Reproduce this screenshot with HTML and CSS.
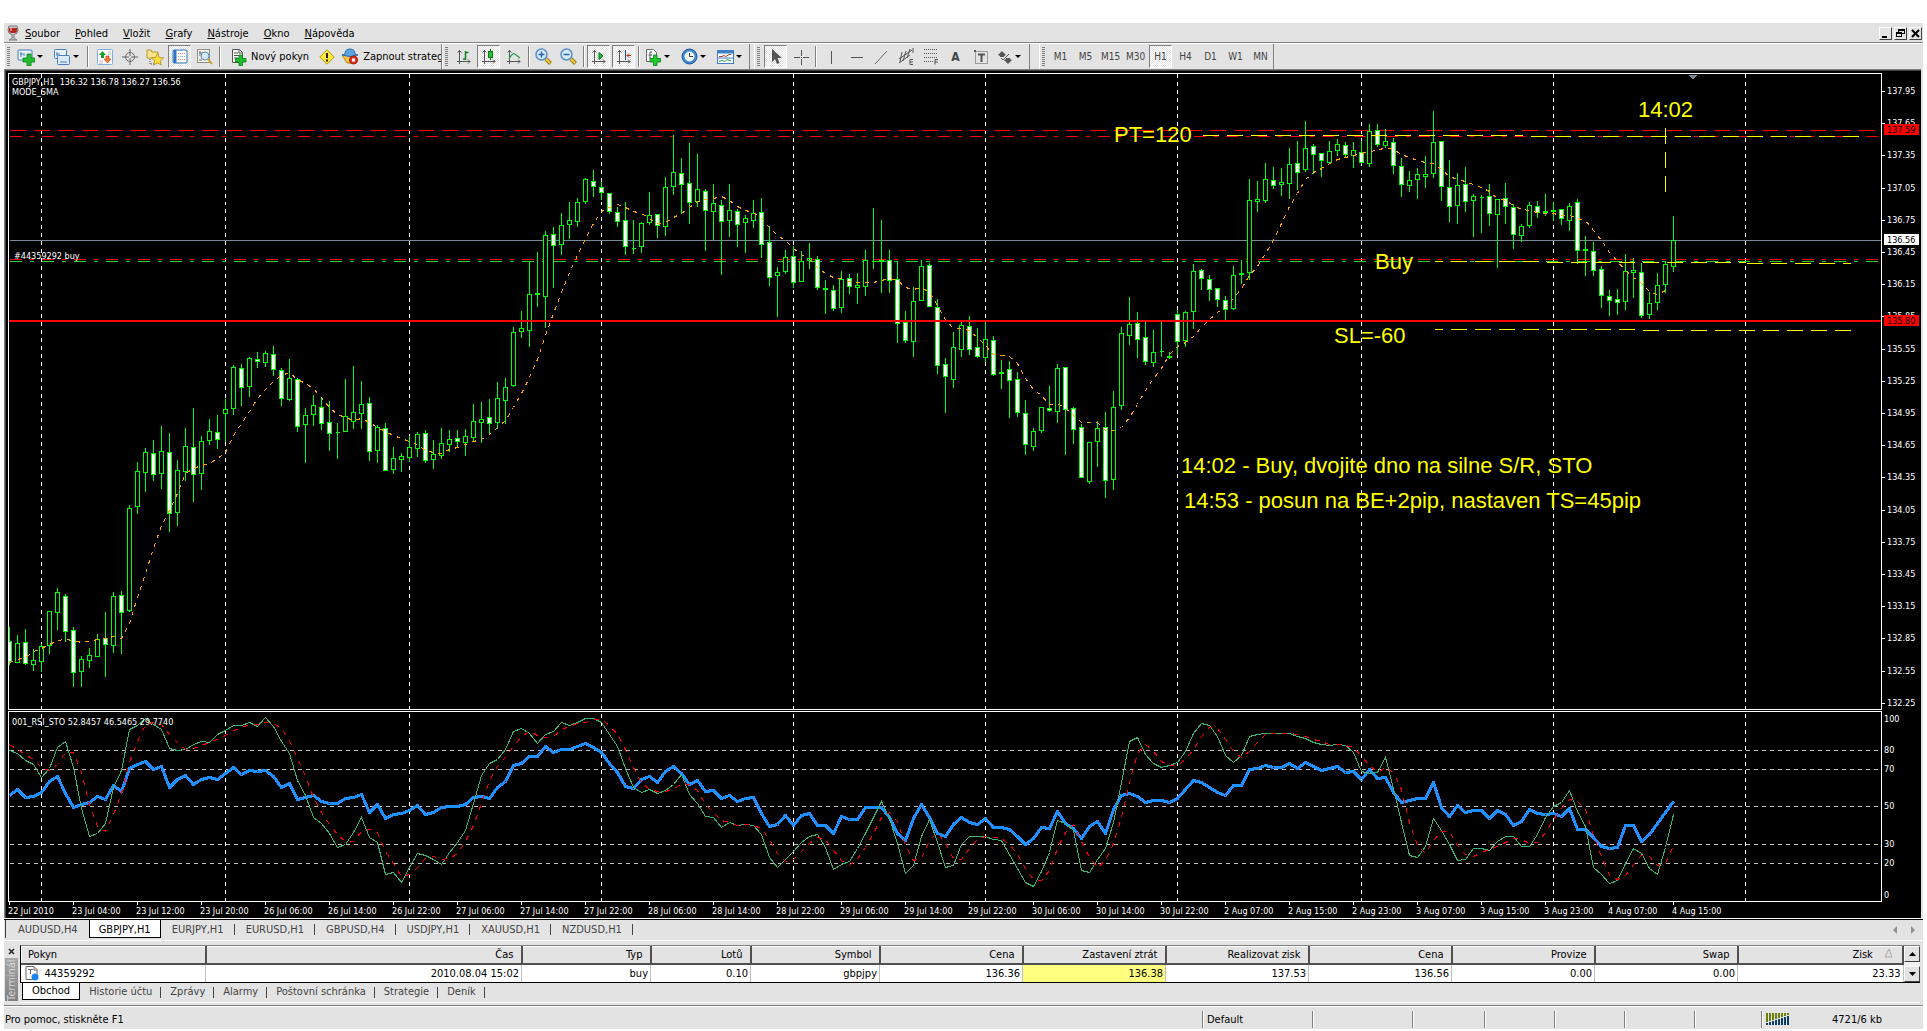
FILE: index.html
```html
<!DOCTYPE html>
<html lang="cs">
<head>
  <meta charset="UTF-8" />
  <meta name="viewport" content="width=device-width, initial-scale=1.0"/>
  <title>GBPJPY,H1</title>
  <link rel="stylesheet" href="styles.css">
</head>
<body>
  <div class="app">
    <header class="menubar">
      <svg class="logo" width="12" height="16" viewBox="0 0 12 16">
        <path d="M2 1h8l1 4q0 4-4 4.500v4l3 1.500H2l3-1.500v-4Q1 9 1 5z" fill="#c9c9c9" stroke="#777"/>
        <path d="M2 3h8q1 4-2 5H4Q1 7 2 3z" fill="#b8251c"/>
        <path d="M4 2v4" stroke="#f6d4d0"/>
      </svg>
      <nav class="menu">
        <a href="#"><u>S</u>oubor</a>
        <a href="#"><u>P</u>ohled</a>
        <a href="#"><u>V</u>ložit</a>
        <a href="#"><u>G</u>rafy</a>
        <a href="#"><u>N</u>ástroje</a>
        <a href="#"><u>O</u>kno</a>
        <a href="#"><u>N</u>ápověda</a>
      </nav>
      <div class="window-buttons">
        <button aria-label="Minimalizovat"><svg width="11" height="11"><path d="M2 9h5" stroke="#000" stroke-width="2"/></svg></button>
        <button aria-label="Obnovit"><svg width="11" height="11" fill="none" stroke="#000" shape-rendering="crispEdges"><path d="M3.500 4V1.500h6v4H7M3 2.500h7M1.500 4.500h5v4h-5zM1 5.500h6"/></svg></button>
        <button aria-label="Zavřít"><svg width="11" height="11"><path d="M2 2l7 7M9 2l-7 7" stroke="#000" stroke-width="2"/></svg></button>
      </div>
    </header>

    <div class="toolbars">
      <div class="toolbar toolbar-main">
        <span class="grip"></span>
        <button class="tool drop" aria-label="Nový graf">
          <svg width="18" height="18" viewBox="0 0 18 18"><rect x="1" y="2" width="14" height="10" rx="1" fill="#e8f1fb" stroke="#4a7fb5"/><path d="M4 4v5M3 6h3M7 5v3" stroke="#4a7fb5"/><path d="M10 6h4v4h4v4h-4v4h-4v-4H6v-4h4z" fill="#1fbf2e" stroke="#0b7a17" stroke-width=".8"/></svg>
        </button>
        <button class="tool drop" aria-label="Profily">
          <svg width="18" height="18" viewBox="0 0 18 18"><rect x="1.500" y="1.500" width="12" height="9" rx="1" fill="#e8f1fb" stroke="#4a7fb5"/><path d="M4 4v4M3 6h4" stroke="#4a7fb5"/><rect x="4.500" y="7.500" width="12" height="9" rx="1" fill="#dbe9f8" stroke="#4a7fb5"/><path d="M7 14h7" stroke="#4a7fb5"/></svg>
        </button>
        <span class="sep"></span>
        <button class="tool" aria-label="Přehled trhu">
          <svg width="16" height="16" viewBox="0 0 16 16"><rect x=".5" y=".5" width="15" height="15" rx="1" fill="#fff" stroke="#7fb0dc"/><path d="M11 3h3M2 12h4M11 5h3M2 14h4" stroke="#bbb"/><path d="M5.500 2L9 6H7v3H4V6H2z" fill="#18a02a"/><path d="M10.500 14l3.500-4h-2V7H9v3H7z" fill="#f47a3a" stroke="#b13d10" stroke-width=".6"/></svg>
        </button>
        <button class="tool" aria-label="Datové okno">
          <svg width="16" height="16" viewBox="0 0 16 16" fill="none" stroke="#666"><circle cx="8" cy="8" r="4.500"/><path d="M8 0v7M8 9v7M0 8h7M9 8h7"/></svg>
        </button>
        <button class="tool" aria-label="Navigátor">
          <svg width="18" height="18" viewBox="0 0 18 18"><path d="M1 2h4l1 2h6v6H1z" fill="#f9e58a" stroke="#b7962c"/><path d="M4 11v5h5" fill="none" stroke="#444" stroke-dasharray="1 1"/><path d="M11.500 5.500l1.800 3.900 4.200.500-3.100 2.900.800 4.200-3.700-2.100L7.800 17l.8-4.200-3.100-2.900 4.200-.5z" fill="#fbdf3b" stroke="#b08a15" stroke-width=".8"/></svg>
        </button>
        <button class="tool pressed" aria-label="Terminál">
          <svg width="16" height="16" viewBox="0 0 16 16"><rect x="1" y="1" width="14" height="13" rx="1" fill="#fff" stroke="#2f74bd"/><path d="M3 1v13" stroke="#2f74bd" stroke-width="3"/><path d="M6 4.500h8M6 10.500h8" stroke="#e07a7a" stroke-dasharray="1 1"/><path d="M6 7.500h8" stroke="#7aa5e0" stroke-dasharray="1 1"/></svg>
        </button>
        <button class="tool" aria-label="Tester strategií">
          <svg width="16" height="16" viewBox="0 0 16 16"><rect x=".5" y=".5" width="12" height="13" fill="#f3f0dc" stroke="#8f8f8f"/><path d="M2 4h4M3 2v5M2 11h3" stroke="#777"/><circle cx="8" cy="7" r="4" fill="#d5e8fa" stroke="#5d8fc4"/><path d="M11 10l4 5" stroke="#caa227" stroke-width="2"/></svg>
        </button>
        <span class="sep"></span>
        <button class="tool text-tool">
          <svg width="16" height="18" viewBox="0 0 16 18"><path d="M1.500 1.500h7l3 3v10h-10z" fill="#fff" stroke="#555"/><path d="M8 1v4h4M3 5h4M3 7.500h6M3 10h4" fill="none" stroke="#555"/><path d="M8 7h3.500v3.500H15V14h-3.500v3.500H8V14H4.500v-3.500H8z" fill="#1fbf2e" stroke="#0b7a17" stroke-width=".8"/></svg>
          Nový pokyn
        </button>
        <button class="tool" aria-label="Upozornění">
          <svg width="16" height="16" viewBox="0 0 16 16"><path d="M8 .8L15.200 8 8 15.200.8 8z" fill="#ffe83b" stroke="#b99a0a"/><path d="M8 4v5M8 10.500v2" stroke="#222" stroke-width="2"/></svg>
        </button>
        <button class="tool text-tool strategy">
          <svg width="18" height="17" viewBox="0 0 18 17"><path d="M1 7h14l-3 8H6z" fill="#f5c542" stroke="#b98813"/><path d="M4 6q0-5 5-5t5 5l3 1q-8 3-16 0z" fill="#5da3e4" stroke="#2c6cae"/><circle cx="12.500" cy="12" r="4" fill="#e0341f" stroke="#a31806"/><rect x="11" y="10.500" width="3" height="3" fill="#fff"/></svg>
          Zapnout strategie
        </button>
      </div>

      <div class="toolbar">
        <span class="grip"></span>
        <button class="tool" aria-label="Sloupcový graf">
          <svg width="16" height="16" viewBox="0 0 16 16" fill="none" stroke="#555"><path d="M3.500 1v14M1 12.500h13M1.500 3.500l2-2 2 2M12 10.500l2 2-2 2"/><path d="M9.500 2v9M9.500 3.500h3M7 10h3" stroke="#12831c" stroke-width="1.500"/></svg>
        </button>
        <button class="tool pressed" aria-label="Svíčkový graf">
          <svg width="16" height="16" viewBox="0 0 16 16" fill="none" stroke="#555"><path d="M3.500 1v14M1 12.500h13M1.500 3.500l2-2 2 2M12 10.500l2 2-2 2"/><path d="M9.500 0v11" stroke="#0b7a17"/><rect x="7.500" y="2.500" width="4" height="6" fill="#25c032" stroke="#0b7a17"/></svg>
        </button>
        <button class="tool" aria-label="Čárový graf">
          <svg width="16" height="16" viewBox="0 0 16 16" fill="none" stroke="#555"><path d="M3.500 1v14M1 12.500h13M1.500 3.500l2-2 2 2M12 10.500l2 2-2 2"/><path d="M3 10q4-8 7-4l4 3" stroke="#2c9a4c" stroke-width="1.200"/></svg>
        </button>
        <span class="sep"></span>
        <button class="tool" aria-label="Přiblížit">
          <svg width="17" height="17" viewBox="0 0 17 17"><path d="M11 11l4.500 4.500" stroke="#9a7a12" stroke-width="4"/><path d="M11 11l4 4" stroke="#f3cf45" stroke-width="2"/><circle cx="6.500" cy="6.500" r="5.500" fill="#d9ebfb" stroke="#5a8fc8" stroke-width="1.500"/><path d="M3.500 6.500h6M6.500 3.500v6" stroke="#2566b0" stroke-width="1.500"/></svg>
        </button>
        <button class="tool" aria-label="Oddálit">
          <svg width="17" height="17" viewBox="0 0 17 17"><path d="M11 11l4.500 4.500" stroke="#9a7a12" stroke-width="4"/><path d="M11 11l4 4" stroke="#f3cf45" stroke-width="2"/><circle cx="6.500" cy="6.500" r="5.500" fill="#d9ebfb" stroke="#5a8fc8" stroke-width="1.500"/><path d="M3.500 6.500h6" stroke="#2566b0" stroke-width="1.500"/></svg>
        </button>
        <span class="sep"></span>
        <button class="tool pressed" aria-label="Automatický posun">
          <svg width="16" height="16" viewBox="0 0 16 16" fill="none" stroke="#555"><path d="M3.500 1v14M1 12.500h13M1.500 3.500l2-2 2 2M12 10.500l2 2-2 2"/><path d="M8 3.500l4 3.500-4 3.500z" fill="#22b32e" stroke="#0b7a17"/></svg>
        </button>
        <button class="tool pressed" aria-label="Odsazení grafu">
          <svg width="16" height="16" viewBox="0 0 16 16" fill="none" stroke="#555"><path d="M3.500 1v14M1 12.500h13M1.500 3.500l2-2 2 2M12 10.500l2 2-2 2"/><path d="M9.500 1v10" stroke="#1d4e89"/><path d="M11 6.500h4M13 4.500l-2 2 2 2" stroke="#b83206"/></svg>
        </button>
        <span class="sep"></span>
        <button class="tool drop" aria-label="Indikátory">
          <svg width="17" height="18" viewBox="0 0 17 18"><path d="M1.500 1.500h7l3 3v9h-10z" fill="#fff" stroke="#666"/><path d="M7 4H5v7M3.500 7H7" fill="none" stroke="#555"/><path d="M8.500 7H12v3.500h3.500V14H12v3.500H8.500V14H5v-3.500h3.500z" fill="#1fce2e" stroke="#0b7a17" stroke-width=".8"/></svg>
        </button>
        <button class="tool drop" aria-label="Periody">
          <svg width="17" height="17" viewBox="0 0 17 17"><circle cx="8.500" cy="8.500" r="7.500" fill="#3b86d6" stroke="#1c559c"/><circle cx="8.500" cy="8.500" r="5" fill="#f3f8fd"/><path d="M8.500 5v3.500H12" fill="none" stroke="#333"/></svg>
        </button>
        <button class="tool drop" aria-label="Šablony">
          <svg width="17" height="16" viewBox="0 0 17 16"><rect x=".5" y="1.500" width="16" height="13" fill="#fff" stroke="#3f7fc6"/><path d="M1 3h15" stroke="#3f7fc6" stroke-width="3"/><path d="M1 9h15" stroke="#3f7fc6"/><path d="M2 7.500h3l2-1 2 1 3-2h2" fill="none" stroke="#b4412b"/><path d="M2 12.500l3-1 3 1 2-2 4 1.500" fill="none" stroke="#2c9a4c"/></svg>
        </button>
      </div>

      <div class="toolbar">
        <span class="grip"></span>
        <button class="tool pressed" aria-label="Kurzor">
          <svg width="16" height="16" viewBox="0 0 16 16"><path d="M4 0v13l3-3 2 5 2.500-1-2-5H14z" fill="#555"/></svg>
        </button>
        <button class="tool" aria-label="Nitkový kříž">
          <svg width="16" height="16" viewBox="0 0 16 16" stroke="#555" shape-rendering="crispEdges"><path d="M8.500 1v6M8.500 10v6M1 8.500h6M10 8.500h6M8 8.500h1"/></svg>
        </button>
        <span class="sep"></span>
        <button class="tool" aria-label="Svislá čára">
          <svg width="16" height="16" viewBox="0 0 16 16" stroke="#555" shape-rendering="crispEdges"><path d="M8.500 2v13"/></svg>
        </button>
        <button class="tool" aria-label="Vodorovná čára">
          <svg width="16" height="16" viewBox="0 0 16 16" stroke="#555" shape-rendering="crispEdges"><path d="M3 8.500h12"/></svg>
        </button>
        <button class="tool" aria-label="Trendová čára">
          <svg width="16" height="16" viewBox="0 0 16 16" stroke="#666"><path d="M2 15L14 2"/></svg>
        </button>
        <button class="tool" aria-label="Kanál">
          <svg width="16" height="17" viewBox="0 0 16 17" stroke="#555" fill="none"><path d="M1 11L14 2M1 15L12 7M4 4L2 14M8 3L5 13M12 1L9 10M15 0v5"/><path d="M15 11.500h-3v5h3M12 14h3"/></svg>
        </button>
        <button class="tool" aria-label="Fibonacci">
          <svg width="16" height="17" viewBox="0 0 16 17" stroke="#555" fill="none"><path d="M1 1.500h14M1 5.500h14M1 9.500h14M1 13.500h9" stroke-dasharray="1 1"/><path d="M15 11.500h-3v5M12 14h3"/></svg>
        </button>
        <button class="tool glyph" aria-label="Text">A</button>
        <button class="tool" aria-label="Popisek">
          <svg width="16" height="16" viewBox="0 0 16 16" fill="none" stroke="#555"><rect x="2.500" y="2.500" width="12" height="12" stroke-dasharray="1 1"/><path d="M5 5.500h7M8.500 5v8" stroke-width="2"/><path d="M1 1h2v2H1z" fill="#555" stroke="none"/></svg>
        </button>
        <button class="tool drop" aria-label="Šipky">
          <svg width="16" height="16" viewBox="0 0 16 16" fill="#555"><path d="M5 2l4 4-2 1v1H3V7L1 6zM11 15l-4-4 2-1V9h4v1l2 1z"/><path d="M12 5l-6 6-2-2" fill="none" stroke="#555"/></svg>
        </button>
      </div>

      <div class="toolbar periods">
        <span class="grip"></span>
        <button class="tool">M1</button>
        <button class="tool">M5</button>
        <button class="tool">M15</button>
        <button class="tool">M30</button>
        <button class="tool pressed">H1</button>
        <button class="tool">H4</button>
        <button class="tool">D1</button>
        <button class="tool">W1</button>
        <button class="tool">MN</button>
      </div>
    </div>

    <main class="chart">
      <div class="pane"><svg id="price" width="100%" height="635"></svg></div>
      <svg class="scale" id="scale" width="39" height="829"></svg>
      <div class="pane"><svg id="indicator" width="100%" height="189"></svg></div>
      <ol class="times" id="times"></ol>
    </main>

    <div class="chart-tabs">
      <button>AUDUSD,H4</button>
      <button class="active">GBPJPY,H1</button>
      <button>EURJPY,H1</button>
      <button>EURUSD,H1</button>
      <button>GBPUSD,H4</button>
      <button>USDJPY,H1</button>
      <button>XAUUSD,H1</button>
      <button>NZDUSD,H1</button>
      <div class="scroll-tabs">
        <svg width="22" height="9"><path d="M4 0v8L0 4zM18 0v8l4-4z" fill="#909090"/></svg>
      </div>
    </div>

    <section class="terminal">
      <div class="terminal-side">
        <button class="close" aria-label="Zavřít terminál"><svg width="7" height="7"><path d="M1 1l5 5M6 1L1 6" stroke="#222" stroke-width="1.500"/></svg></button>
        <span class="terminal-title">Terminál</span>
      </div>
      <div class="terminal-body">
        <div class="orders-wrap">
          <table class="orders">
            <thead>
              <tr>
                <th class="c-order">Pokyn</th>
                <th class="c-time">Čas</th>
                <th class="c-type">Typ</th>
                <th class="c-lots">Lotů</th>
                <th class="c-symbol">Symbol</th>
                <th class="c-num">Cena</th>
                <th class="c-num">Zastavení ztrát</th>
                <th class="c-num">Realizovat zisk</th>
                <th class="c-num">Cena</th>
                <th class="c-num">Provize</th>
                <th class="c-num">Swap</th>
                <th>Zisk <svg class="sort" width="9" height="9"><path d="M1 8L5 0l3 8z" fill="none" stroke="#aaa"/></svg></th>
              </tr>
            </thead>
            <tbody>
              <tr>
                <td>
                  <svg class="order-icon" width="14" height="15" viewBox="0 0 14 15"><path d="M1 .5h8l3 3v10H1z" fill="#fff" stroke="#666"/><path d="M3 3.500h5M5.500 3v5M9 1v3h3" fill="none" stroke="#666"/><circle cx="10" cy="11" r="3.500" fill="#1e86f0"/></svg>44359292
                </td>
                <td>2010.08.04 15:02</td>
                <td>buy</td>
                <td>0.10</td>
                <td>gbpjpy</td>
                <td>136.36</td>
                <td class="stop">136.38</td>
                <td>137.53</td>
                <td>136.56</td>
                <td>0.00</td>
                <td>0.00</td>
                <td>23.33</td>
              </tr>
            </tbody>
          </table>
          <div class="scrollbar">
            <button aria-label="Nahoru"><svg width="7" height="4"><path d="M0 4h7L3.500 0z"/></svg></button>
            <button aria-label="Dolů"><svg width="7" height="4"><path d="M0 0h7L3.500 4z"/></svg></button>
          </div>
        </div>
        <div class="terminal-tabs">
          <button class="active">Obchod</button>
          <button>Historie účtu</button>
          <button>Zprávy</button>
          <button>Alarmy</button>
          <button>Poštovní schránka</button>
          <button>Strategie</button>
          <button>Deník</button>
        </div>
      </div>
    </section>

    <footer class="statusbar">
      <span class="help">Pro pomoc, stiskněte F1</span>
      <span class="cell s110">Default</span>
      <span class="cell s100"></span>
      <span class="cell s72"></span>
      <span class="cell s70"></span>
      <span class="cell s70"></span>
      <span class="cell s70"></span>
      <span class="cell s67"></span>
      <span class="cell traffic">
        <svg width="24" height="12" shape-rendering="crispEdges">
          <path d="M1 0v9M4 0v8M7 0v7M10 0v6M13 0v5M16 0v4M19 0v3M22 0v2" stroke="#6b7f10" stroke-width="2"/>
          <path d="M1 12v-2M4 12v-3M7 12v-4M10 12v-5M13 12v-6M16 12v-7M19 12v-8M22 12V3" stroke="#0d3f66" stroke-width="2"/>
        </svg>
        <span>4721/6 kb</span>
      </span>
    </footer>
  </div>

  <script src="chart.js"></script>
</body>
</html>
```

FILE: styles.css
```css
* {
  box-sizing: border-box;
}

body {
  margin: 0;
  padding: 23px 4px 4px;
  background: #fff;
  color: #000;
  font-family: "DejaVu Sans Condensed", "Noto Sans", sans-serif;
  font-size: 11px;
}

button {
  margin: 0;
  padding: 0;
  border: none;
  background: none;
  color: inherit;
  font: inherit;
}

.app {
  display: flex;
  flex-direction: column;
  background: #e3e3e3;
}

/* menu */

.menubar {
  display: flex;
  align-items: center;
  height: 20px;
  padding: 1px 1px 0 3px;
  border-bottom: 1px solid #808080;
}

.menu {
  display: flex;
  flex: 1;
  gap: 15px;
  padding-left: 6px;
}

.menu a {
  color: #000;
  text-decoration: none;
}

.window-buttons {
  display: flex;
  gap: 2px;
}

.window-buttons button,
.scrollbar button {
  display: flex;
  align-items: center;
  justify-content: center;
  background: #e3e3e3;
  border: 1px solid;
  border-color: #fff #404040 #404040 #fff;
}

.window-buttons button {
  width: 13px;
  height: 13px;
}

/* toolbars */

.toolbars {
  display: flex;
  gap: 4px;
  height: 26px;
  border-top: 1px solid #fff;
}

.toolbar {
  display: flex;
  align-items: center;
  border-left: 1px solid #fff;
  border-right: 1px solid #808080;
}

.toolbar-main {
  width: 438px;
  margin-right: -4px;
  overflow: hidden;
}

.grip {
  flex: none;
  width: 3px;
  height: 20px;
  margin: 0 3px 0 2px;
  background: repeating-linear-gradient(#808080 0 1px, #e3e3e3 1px 2px);
}

.tool {
  display: flex;
  flex: none;
  align-items: center;
  justify-content: center;
  width: 23px;
  height: 23px;
  margin: 0 1px;
  color: #444;
  white-space: nowrap;
}

.tool.pressed {
  border: 1px solid;
  border-color: #808080 #fff #fff #808080;
  background: repeating-conic-gradient(#fff 0 25%, #e3e3e3 0 50%) 0 0 / 2px 2px;
}

.tool.drop {
  justify-content: flex-start;
  gap: 2px;
  width: 36px;
  margin: 0;
  padding-left: 4px;
}

.tool.drop::after {
  content: "";
  border: 3px solid transparent;
  border-top-color: #000;
  border-bottom: none;
}

.tool.text-tool {
  gap: 4px;
  width: auto;
  padding: 0 4px 0 6px;
  color: #000;
}

.tool.strategy {
  padding-left: 1px;
}

.tool.glyph {
  font-size: 12px;
  font-weight: bold;
}

.periods {
  margin-left: 5px;
  font-size: 10px;
}

.sep {
  flex: none;
  width: 2px;
  height: 21px;
  margin: 0 1px 0 2px;
  border-left: 1px solid #808080;
  border-right: 1px solid #fff;
}

.toolbar-main .sep {
  margin: 0 3px 0 2px;
}

/* chart */

.chart {
  display: grid;
  grid-template-columns: 1fr 39px;
  row-gap: 1px;
  margin-right: 2px;
  padding: 3px 0 0 3px;
  border-top: 1px solid #808080;
  border-left: 1px solid #808080;
  background: #000;
  box-shadow: inset 1px 1px #404040;
  color: #fff;
}

.pane {
  border: 1px solid #fff;
}

.pane svg {
  overflow: hidden;
}

.chart svg {
  display: block;
}

.chart svg text {
  font-size: 9px;
  fill: #fff;
}

.chart svg .note {
  font-family: "Liberation Sans", Arial, sans-serif;
  font-size: 22px;
  fill: #ff0;
}

.chart svg .dark {
  fill: #000;
}

.scale {
  grid-row: 1 / 3;
  grid-column: 2;
}

.times {
  display: flex;
  grid-column: 1 / 3;
  height: 16px;
  margin: -1px 0 0;
  padding: 0;
  list-style: none;
  font-size: 9px;
}

.times li {
  flex: none;
  width: 64px;
  padding-top: 3px;
  line-height: 13px;
  white-space: nowrap;
  background: linear-gradient(#fff, #fff) 1px 0 / 1px 3px no-repeat;
}

/* chart tabs */

.chart-tabs {
  display: flex;
  align-items: flex-start;
  height: 22px;
  margin-top: 1px;
  padding-left: 1px;
  border-top: 1px solid #000;
  border-bottom: 1px solid #fff;
  box-shadow: 0 -1px #fff;
  color: #444;
}

.chart-tabs button {
  height: 18px;
  padding: 1px 11px 0;
  position: relative;
}

.chart-tabs button:first-child {
  padding-left: 12px;
  border-left: 1px solid #404040;
}

.chart-tabs .active,
.terminal-tabs .active {
  background: #fff;
  border: 1px solid #000;
  border-top: none;
  color: #000;
}

.chart-tabs .active {
  padding: 2px 9px 0;
}

.chart-tabs button:nth-child(n+3)::after,
.terminal-tabs button:nth-child(n+2)::after {
  content: "";
  position: absolute;
  top: 4px;
  right: 0;
  width: 1px;
  height: 11px;
  background: #444;
}

.scroll-tabs {
  margin-left: auto;
  padding: 5px 8px 0 0;
}

/* terminal */

.terminal {
  display: flex;
  padding: 4px 3px 0 1px;
}

.terminal-side {
  display: flex;
  flex-direction: column;
  align-items: center;
  width: 13px;
  margin-right: 2px;
}

.close {
  height: 13px;
}

.close svg {
  display: block;
}

.terminal-title {
  width: 13px;
  height: 43px;
  overflow: hidden;
  background: linear-gradient(#808080, #a8a8a8);
  color: #d4d4d4;
  line-height: 13px;
  writing-mode: vertical-rl;
  transform: rotate(180deg);
}

.terminal-body {
  flex: 1;
  min-width: 0;
}

.orders-wrap {
  display: flex;
  border-top: 1px solid #808080;
  border-left: 1px solid #000;
  border-bottom: 1px solid #000;
}

.orders {
  flex: 1;
  table-layout: fixed;
  border-collapse: collapse;
  background: #fff;
}

.orders th,
.orders td {
  overflow: hidden;
  font-weight: normal;
  text-align: right;
  white-space: nowrap;
}

.orders th {
  height: 17px;
  padding: 0 7px;
  background: #e3e3e3;
  border-top: 1px solid #fff;
  border-left: 1px solid #fff;
  border-right: 2px solid #505050;
  border-bottom: 2px solid #505050;
}

.orders td {
  height: 18px;
  padding: 0 2px;
  border-right: 1px solid #c0c0c0;
}

.orders th:first-child,
.orders td:first-child {
  text-align: left;
}

.orders th:first-child {
  padding-left: 6px;
}

.orders td:first-child {
  padding-left: 3px;
}

.orders td.stop {
  background: #ffff80;
}

.order-icon {
  margin-right: 6px;
  vertical-align: middle;
}

.sort {
  margin: 0 2px 0 8px;
}

.c-order { width: 184px; }
.c-time { width: 316px; }
.c-type { width: 129px; }
.c-lots { width: 100px; }
.c-symbol { width: 129px; }
.c-num { width: 143px; }

.scrollbar {
  display: flex;
  flex-direction: column;
  justify-content: space-between;
  width: 16px;
  background: #f2f2f2;
}

.scrollbar button {
  width: 16px;
  height: 16px;
}

.terminal-tabs {
  display: flex;
  align-items: flex-start;
  height: 20px;
  padding-left: 2px;
  border-bottom: 1px solid #fff;
  color: #444;
}

.terminal-tabs button {
  height: 17px;
  padding: 0 9px;
  position: relative;
}

/* status bar */

.statusbar {
  display: flex;
  align-items: center;
  height: 24px;
  margin-top: 2px;
  padding-top: 4px;
  border-top: 1px solid #808080;
  box-shadow: inset 0 1px #fff;
}

.help {
  flex: 1;
  padding-left: 1px;
}

.cell {
  display: flex;
  align-items: center;
  height: 17px;
  padding-left: 4px;
  border-left: 1px solid #808080;
  box-shadow: inset 1px 0 #fff;
}

.s110 { width: 110px; }
.s100 { width: 100px; }
.s72 { width: 72px; }
.s70 { width: 70px; }
.s67 { width: 67px; }

.traffic {
  gap: 42px;
  width: 162px;
}
```

FILE: chart.js
```js
const STEP = 8;
const FIRST_X = 9;

// high, body top, body bottom, low, f = falling
const candles = `
627 641 662 665 f|635 643 663 663|629 642 664 665 f|649 660 665 671|644 646 662 672|611 611 646 654|588 592 613 630|594 596 632 642 f
627 630 673 687 f|656 659 672 687|648 655 661 668|634 639 657 657|612 638 645 677 f|592 596 646 653|591 595 613 654 f|505 508 611 612
462 471 507 514|448 452 473 492|440 453 475 481 f|426 451 474 489|433 452 514 532 f|460 470 513 526|428 446 472 481|408 447 475 502 f
436 441 474 490|419 431 441 445|415 432 440 449 f|399 409 414 442|365 367 409 415|364 368 388 406 f|357 358 387 397|352 359 362 368 f
351 353 363 367|346 354 370 376 f|368 370 399 406 f|359 378 400 401|378 379 427 432 f|408 415 425 463|395 405 415 426|398 407 424 430 f
401 422 434 451 f|423 432 433 459|379 416 432 432|366 412 422 429|381 404 414 429|397 403 452 461 f|425 427 451 463|423 428 471 471 f
447 458 470 474|453 456 460 472|436 447 458 462|432 434 449 457|430 433 461 463 f|440 454 460 469|428 443 456 459|430 439 445 452
430 438 442 448 f|429 436 443 456|404 421 438 442|402 419 423 443|399 417 424 435 f|382 398 423 429|378 387 401 424|327 332 386 387
311 328 332 338|261 294 331 347|252 293 295 307|231 235 297 328|227 234 246 288 f|213 225 245 255|202 220 225 239|198 202 222 227
178 179 202 204|170 181 187 197 f|182 187 193 200 f|193 193 212 214 f|207 212 222 227 f|202 220 247 255 f|220 248 249 254|222 223 247 253
192 215 223 225|214 214 226 238 f|177 187 227 236|135 172 187 195|158 173 185 214 f|143 183 203 224 f|154 189 202 207|189 191 211 251 f
184 203 212 240|200 205 222 275 f|184 210 221 237|209 211 225 247 f|215 218 223 253|200 213 221 228|198 212 245 258 f|226 242 278 286 f
267 272 276 317|250 257 272 274|246 256 283 288 f|251 261 282 282|243 258 261 269|256 259 288 290 f|280 288 290 314|285 290 309 311 f
271 279 308 313|274 278 287 294 f|273 285 288 304|250 260 287 296|208 261 262 269|220 260 262 293|250 260 281 293 f|261 279 324 343 f
311 322 341 343 f|287 301 342 357|260 266 301 301|263 265 307 307 f|299 307 366 374 f|358 364 377 413 f|332 347 380 388|322 325 350 357
316 326 350 355 f|328 347 357 358 f|322 339 358 362|336 340 375 376 f|360 372 374 389|361 369 381 418 f|372 379 413 417 f|400 413 445 455 f
428 431 447 451|407 407 431 433|386 408 411 412 f|364 368 412 423|367 367 410 455 f|407 408 430 444 f|424 427 478 478 f|442 442 482 484
421 428 442 467|412 427 481 498 f|391 407 480 490|327 333 406 410|297 324 336 345|312 323 340 358 f|321 337 362 365 f|330 352 363 367
321 351 352 357|352 356 358 359|310 314 342 355 f|311 312 341 347|264 271 312 329|269 270 279 290 f|275 279 290 301 f|288 288 300 307 f
296 300 310 320 f|266 275 309 310|260 273 275 284|179 200 273 280|181 199 202 212|163 179 201 203|167 180 186 189 f|168 182 185 196
148 164 184 199|141 163 173 190 f|121 148 170 172|144 146 155 174 f|153 153 161 177 f|141 151 163 164|139 144 151 156|142 145 155 158 f
142 150 156 168|141 152 163 164 f|124 131 164 167|124 130 145 147 f|129 141 146 148|138 142 166 174 f|158 166 185 197 f|171 180 186 192
168 174 180 199|156 174 177 188|111 142 174 178|141 141 187 201 f|160 187 207 222 f|173 185 206 224|167 184 202 212 f|194 196 201 237
195 197 198 233|184 196 214 226 f|199 199 215 268|183 198 207 224 f|204 207 235 249 f|224 226 236 242|202 205 226 228|201 206 213 218 f
194 211 213 216|202 210 212 221|209 209 219 225 f|203 206 221 231|199 202 251 264 f|236 249 251 276|242 251 271 276 f|266 269 296 308 f
290 296 301 316 f|289 299 303 315 f|254 271 302 310|258 270 273 298|263 272 316 318 f|292 303 315 319|273 285 303 310|261 264 285 293
216 240 267 272`.trim().split(/[|\n]/).map(c => c.split(' '));

const average = nums(`
662 659 657 651 648 644 640 639 640 642 641 639 638 636 638 623 597 573 548 525 510 493 473 468 465 463 458 452 435 423
411 398 389 381 375 372 379 383 388 397 407 414 417 420 418 422 427 431 435 438 441 444 450 452 453 449 447 444 441 439
434 427 420 407 393 377 359 335 313 292 272 255 238 223 211 207 204 207 211 213 218 223 222 217 213 207 201 199 198 196
200 206 210 212 218 227 235 240 248 254 259 267 273 277 278 281 282 282 282 280 278 280 287 289 287 292 305 319 328 328
330 337 345 354 355 356 363 378 389 395 404 403 408 415 422 422 422 430 430 427 417 404 390 378 368 354 346 342 336 327
319 312 307 298 288 275 266 253 240 223 206 193 179 172 168 163 159 157 155 153 151 150 147 149 154 157 160 162 163 169
176 179 181 184 187 191 198 200 205 209 210 212 213 213 215 215 218 220 230 240 252 261 270 277 283 291 294 290`);

// two leading values are only used by the signal line
const stochastic = nums(`
737 745
750 753 760 764 777 768 747 741 767 808 836 833 823 787 770 729 725 718 724 729 748 750 749 744 741 742 734 730 725 725
722 726 717 726 741 753 780 795 817 823 833 847 844 832 817 837 842 874 872 882 867 853 855 859 864 852 842 830 803 775
763 759 749 731 728 733 743 734 731 722 725 722 718 718 722 734 746 768 787
792 789 793 790 784 774 794 803 816 817 827 822 825 824 825 834 857 867 859 851 842 836 834 847 869 864 861 848 833 817
801 818 843 873 865 836 819 842 867 865 844 836 836 836 839 840 854 868 882 886 871 852 820 823 830 870 872 859 848 822
782 741 737 754 763 767 765 762 751 733 723 725 736 755 762 755 736 734 733 733
733 733 736 738 742 744 745 744 745 752 771 773 772 757 788 822 855 857 846 818 830 844 860 859 848 848 850 841 836 836
846 846 834 817 806 802 790 811 826 867 874 883 880 863 848 853 868 874 847 814`);

const rsi = nums(`
795 789 797 796 792 781 776 793 807 804 802 796 799 785 791 768 764 761 769 766 787 779 775 784 779 777 779 773 767 774
770 771 770 776 787 783 799 797 795 801 803 803 798 797 794 812 804 818 814 813 810 805 814 812 807 806 806 804 797 796
798 787 781 765 763 756 756 746 752 749 749 746 743 747 752 763 772 786 788
779 776 782 771 766 773 784 780 791 790 798 795 801 798 797 813 826 824 815 825 815 813 825 825 833 816 819 819 807 807
807 817 833 840 818 804 817 833 836 824 817 822 824 818 827 827 829 836 844 838 827 828 811 823 828 838 826 821 833 809
795 793 796 802 800 800 802 798 789 780 782 787 792 795 785 785 769 768 765 767
767 763 768 762 766 770 768 766 772 771 779 769 778 777 792 802 800 798 798 782 807 816 805 812 810 810 818 810 814 825
821 809 813 814 813 816 808 829 829 837 846 848 847 825 825 841 834 823 812 801`);

const days = [41, 225, 409, 601, 793, 985, 1177, 1361, 1553, 1745];
const END = 6000;

function nums(text) {
  return text.trim().split(/\s+/).map(Number);
}

function path(d, stroke, more = '') {
  return `<path d="${d}" fill="none" stroke="${stroke}" ${more}/>`;
}

function hline(y, stroke, dash = '', x1 = FIRST_X, x2 = END) {
  return path(`M${x1} ${y}H${x2}`, stroke, dash && `stroke-dasharray="${dash}"`);
}

function series(values) {
  return 'M' + values.map((y, i) => `${FIRST_X + i * STEP} ${y}`).join('L');
}

function text(x, y, value, cls = '') {
  return `<text x="${x}" y="${y}" class="${cls}">${value}</text>`;
}

function grid(top, bottom) {
  return days.map(x => path(`M${x} ${top}V${bottom}`, '#fff', 'stroke-dasharray="4 4"')).join('');
}

function drawPrice() {
  const dashDot = '12 8 4 8';
  let wicks = '';
  let rising = '';
  let falling = '';

  candles.forEach(([high, top, bottom, low, dir], i) => {
    const x = FIRST_X + i * STEP;
    const body = `M${x - 2} ${top}h4v${bottom - top - 1}h-4z`;
    wicks += `M${x} ${high}V${low - 1}`;
    if (dir) {
      falling += body;
    } else {
      rising += body;
    }
  });

  document.getElementById('price').innerHTML = `
    <g transform="translate(-8.5 -73.5)" shape-rendering="crispEdges">
      ${grid(73, 709)}
      ${hline(130, '#f00', '16 8')}
      ${hline(136, '#f00', dashDot)}
      ${hline(240, '#778899')}
      ${hline(259, '#f00', dashDot)}
      ${hline(261, '#32cd32', dashDot)}
      ${path(wicks, '#0f0', 'stroke-linecap="square"')}
      <path d="${rising}" fill="#000" stroke="#0f0"/>
      <path d="${falling}" fill="#fff" stroke="#0f0"/>
      ${path(series(average), '#ffa500', 'stroke-dasharray="4 5"')}
      <rect x="8" y="319.500" width="${END}" height="2" fill="#f00"/>
      ${path('M1202 135H1522M1530 136H1858', '#ff0', 'stroke-dasharray="16 8"')}
      ${path('M1434 261H1545', '#ff0', 'stroke-dasharray="16 8" stroke-dashoffset="8"')}
      ${path('M1546 262H1745M1746 263H1850', '#ff0', 'stroke-dasharray="16 8"')}
      ${path('M1434 329H1634', '#ff0', 'stroke-dasharray="16 8" stroke-dashoffset="8"')}
      ${path('M1642 330H1850', '#ff0', 'stroke-dasharray="16 8"')}
      ${path('M1665 127V191', '#ff0', 'stroke-dasharray="16 8"')}
      <path d="M1687 74h10l-5 5z" fill="#778899"/>
    </g>
    <g transform="translate(-9 -74)">
      ${text(12, 85, 'GBPJPY,H1&nbsp; 136.32 136.78 136.27 136.56')}
      ${text(12, 95, 'MODE_SMA')}
      ${text(14, 259, '#44359292 buy')}
      ${text(1114, 142, 'PT=120', 'note')}
      ${text(1638, 117, '14:02', 'note')}
      ${text(1375, 269, 'Buy', 'note')}
      ${text(1334, 343, 'SL=-60', 'note')}
      ${text(1181, 473, '14:02 - Buy, dvojite dno na silne S/R, STO', 'note')}
      ${text(1184, 508, '14:53 - posun na BE+2pip, nastaven TS=45pip', 'note')}
    </g>`;
}

function drawIndicator() {
  const signal = stochastic.slice(2).map((y, i) =>
    Math.round((stochastic[i] + stochastic[i + 1] + y) / 3));

  document.getElementById('indicator').innerHTML = `
    <g transform="translate(-8.5 -711.5)" shape-rendering="crispEdges">
      ${grid(713, 901)}
      ${[750, 769, 806, 844, 863].map(y => hline(y, '#c0c0c0', '4 4')).join('')}
      ${path(series(rsi), '#1e90ff', 'stroke-width="3" stroke-linejoin="round"')}
      ${path(series(stochastic.slice(2)), '#3cb371')}
      ${path(series(signal), '#f00', 'stroke-dasharray="5 6"')}
    </g>
    <g transform="translate(-9 -712)">
      ${text(12, 725, '001_RSI_STO 52.8457 46.5465 29.7740')}
    </g>`;
}

function badge(y, value, fill) {
  return `<rect x="2" y="${y - 6}" width="35" height="11" fill="${fill}"/>` +
    text(5, y + 3, value, 'dark');
}

function drawScale() {
  let html = '';
  for (let i = 0; i < 20; i++) {
    const y = Math.round(18 + i * 32.2);
    html += `<rect y="${y}" width="3" height="1" fill="#fff"/>`;
    html += text(5, y + 3, (137.95 - i * 0.3).toFixed(2));
  }
  html += badge(57, '137.59', '#f00');
  html += badge(167, '136.56', '#fff');
  html += badge(248, '135.80', '#f00');
  [[100, 649], [80, 680], [70, 699], [50, 736], [30, 774], [20, 793], [0, 825]].forEach(([v, y]) => {
    html += text(2, y, v);
  });
  document.getElementById('scale').innerHTML = html;
}

function drawTimes() {
  const labels = ['22 Jul 2010', '23 Jul 04:00', '23 Jul 12:00', '23 Jul 20:00'];
  ['26 Jul', '27 Jul', '28 Jul', '29 Jul', '30 Jul'].forEach(d => {
    labels.push(d + ' 06:00', d + ' 14:00', d + ' 22:00');
  });
  ['2 Aug', '3 Aug'].forEach(d => {
    labels.push(d + ' 07:00', d + ' 15:00', d + ' 23:00');
  });
  labels.push('4 Aug 07:00', '4 Aug 15:00');
  document.getElementById('times').innerHTML = labels.map(l => `<li>${l}</li>`).join('');
}

drawPrice();
drawIndicator();
drawScale();
drawTimes();
```
